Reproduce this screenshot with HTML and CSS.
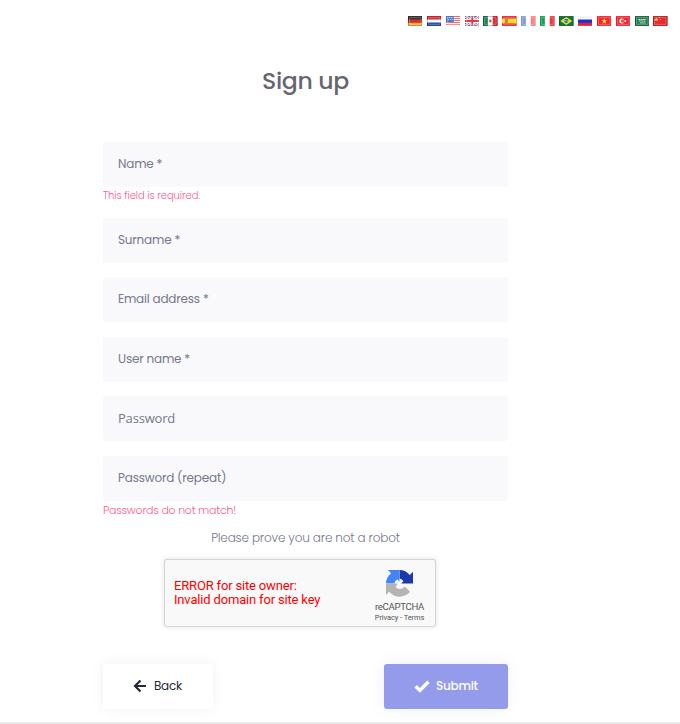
FILE: index.html
```html
<!DOCTYPE html>
<html lang="en">
<head>
<meta charset="utf-8">
<title>Sign up</title>
<link rel="stylesheet" href="styles.css">
</head>
<body>
<nav class="flags">
  <svg viewBox="0 0 15 10"><path fill="#222" d="M0 0h15v4H0z"/><path fill="#e01c12" d="M0 3.500h15V7H0z"/><path fill="#edb52b" d="M0 7h15v3H0z"/><path class="gloss" d="M1.500 1.500h12v7h-12z"/><path class="rim" d="M.5.5h14v9H.5z"/></svg>
  <svg viewBox="0 0 15 10"><path fill="#e01622" d="M0 0h15v4H0z"/><path fill="#fff" d="M0 3.500h15V7H0z"/><path fill="#0a45a8" d="M0 6.500h15V10H0z"/><path class="gloss" d="M1.500 1.500h12v7h-12z"/><path class="rim" d="M.5.5h14v9H.5z"/></svg>
  <svg viewBox="0 0 15 10"><path fill="#fff" d="M0 0h15v10H0z"/><path stroke="#e7555b" d="M0 .5h15M0 2.500h15M0 4.500h15M0 6.500h15M0 8.500h15"/><path fill="#3d70cc" d="M0 0h8v6H0z"/><path stroke="#c6d9f5" stroke-dasharray="1 1" d="M1 1.500h6M2 3.500h5"/><path class="gloss" d="M1.500 1.500h12v7h-12z"/></svg>
  <svg viewBox="0 0 15 10"><path fill="#3565b1" d="M0 0h15v10H0z"/><path stroke="#fff" stroke-width="2.400" d="m0 0 15 10M15 0 0 10"/><path stroke="#df4b50" d="m0 0 15 10M15 0 0 10"/><path stroke="#fff" stroke-width="4" d="M7.500 0v10M0 5h15"/><path stroke="#dd2937" stroke-width="2" d="M7.500 0v10M0 5h15"/><path class="gloss" d="M1.500 1.500h12v7h-12z"/></svg>
  <svg viewBox="0 0 15 10"><path fill="#fff" d="M0 0h15v10H0z"/><path fill="#087b45" d="M0 0h5v10H0z"/><path fill="#e01c2a" d="M10 0h5v10h-5z"/><circle cx="7.500" cy="5" r="1.500" fill="#987344"/><path class="gloss" d="M1.500 1.500h12v7h-12z"/><path class="rim" d="M.5.5h14v9H.5z"/></svg>
  <svg viewBox="0 0 15 10"><path fill="#e31721" d="M0 0h15v10H0z"/><path fill="#ffd51c" d="M0 2.500h15v5H0z"/><path fill="#b97932" d="M3 3h3v4H3z"/><path class="gloss" d="M1.500 1.500h12v7h-12z"/></svg>
  <svg viewBox="0 0 15 10"><path fill="#fff" d="M0 0h15v10H0z"/><path fill="#7095d8" d="M0 0h5v10H0z"/><path fill="#f07a7e" d="M10 0h5v10h-5z"/><path class="gloss" d="M1.500 1.500h12v7h-12z"/></svg>
  <svg viewBox="0 0 15 10"><path fill="#fff" d="M0 0h15v10H0z"/><path fill="#099646" d="M0 0h5v10H0z"/><path fill="#ed2931" d="M10 0h5v10h-5z"/><path class="gloss" d="M1.500 1.500h12v7h-12z"/></svg>
  <svg viewBox="0 0 15 10"><path fill="#0a7d35" d="M0 0h15v10H0z"/><path fill="#f4df2d" d="m7.500 1 6 4-6 4-6-4z"/><circle cx="7.500" cy="5" r="2.200" fill="#3568a8"/><path stroke="#d8e8e8" stroke-width=".6" d="m5.500 4.500 4 1"/><path class="rim" d="M.5.5h14v9H.5z"/></svg>
  <svg viewBox="0 0 15 10"><path fill="#f4f4f8" d="M0 0h15v4H0z"/><path fill="#1730d5" d="M0 3.500h15V7H0z"/><path fill="#e7202b" d="M0 7h15v3H0z"/></svg>
  <svg viewBox="0 0 15 10"><path fill="#f0141c" d="M0 0h15v10H0z"/><path fill="#ffdf2c" d="m7.500 2 .8 2.200h2.200L8.700 5.600l.7 2.200-1.900-1.300-1.900 1.300.7-2.200-1.800-1.400h2.200z"/><path class="gloss" d="M1.500 1.500h12v7h-12z"/></svg>
  <svg viewBox="0 0 15 10"><path fill="#f0141f" d="M0 0h15v10H0z"/><circle cx="6" cy="5" r="2.600" fill="#fff"/><circle cx="6.900" cy="5" r="1.900" fill="#e83c45"/><circle cx="9.600" cy="5" r="1" fill="#fff"/><path class="gloss" d="M1.500 1.500h12v7h-12z"/></svg>
  <svg viewBox="0 0 15 10"><path fill="#147340" d="M0 0h15v10H0z"/><path stroke="#c8ddcf" d="M3.500 3.500h8M4 5h7" stroke-dasharray="2 .4"/><path stroke="#c8ddcf" stroke-width=".8" d="M5 7h6"/><path class="gloss" d="M1.500 1.500h12v7h-12z"/><path class="rim" d="M.5.5h14v9H.5z"/></svg>
  <svg viewBox="0 0 15 10"><path fill="#e81a1e" d="M0 0h15v10H0z"/><path fill="#ffd43c" d="m3.500 1.500.6 1.400h1.400l-1.100 1 .4 1.400-1.300-.8-1.300.8.4-1.400-1.100-1h1.400zM6 1h1v1H6zM7 3h1v1H7z"/><path class="gloss" d="M1.500 1.500h12v7h-12z"/><path class="rim" d="M.5.5h14v9H.5z"/></svg>
</nav>
<main class="signup">
  <h1>Sign up</h1>
  <form>
    <label class="field name">Name *</label>
    <p class="error required">This field is required.</p>
    <label class="field surname">Surname *</label>
    <label class="field email">Email address *</label>
    <label class="field user">User name *</label>
    <label class="field password">Password</label>
    <label class="field repeat">Password (repeat)</label>
    <p class="error mismatch">Passwords do not match!</p>
    <p class="prove">Please prove you are not a robot</p>
    <section class="captcha">
      <p class="captcha-error">ERROR for site owner:<br>Invalid domain for site key</p>
      <div class="captcha-brand">
        <svg class="captcha-logo" viewBox="0 0 64 64"><path fill="#1c3aa9" d="M64 32V4.400l-7.600 7.600A32 32 0 0 0 32 0v20a12 12 0 0 1 9.300 6.800L36 32z"/><path fill="#4285f4" d="M32 0H4.500l7.600 7.600A32 32 0 0 0 0 32h20a12 12 0 0 1 6.800-9.300L32 28z"/><path fill="#b4b4b4" d="M0 32v27.500l7.700-7.700A32 32 0 0 0 57 51.500L44.500 39a14 14 0 0 1-21.700 1.300L28 32z"/></svg>
        <span class="brand-name">reCAPTCHA</span>
        <span class="brand-links">Privacy - Terms</span>
      </div>
    </section>
    <div class="actions">
      <button class="button back" type="button"><svg viewBox="0 0 14 14"><path d="M7.500 1.500 2 7l5.500 5.500M2.500 7H13"/></svg><span>Back</span></button>
      <button class="button submit" type="button"><svg viewBox="0 0 16 14"><path d="m1.600 7.200 4.300 4.200 8.600-8.600"/></svg><span>Submit</span></button>
    </div>
  </form>
</main>
<footer class="edge"></footer>
</body>
</html>
```
FILE: styles.css
```css
* { box-sizing: border-box; }
body {
  margin: 0;
  height: 724px;
  overflow: hidden;
  display: flex;
  flex-direction: column;
  background: #fff;
  font-family: Poppins, Inter, "Open Sans", sans-serif;
  font-size: 12px;
  color: #6c7293;
}
p, h1 { margin: 0; }
svg { display: block; fill: none; }
.flags {
  display: flex;
  justify-content: flex-end;
  gap: 4.300px;
  height: 26px;
  padding: 16px 12px 0 0;
  flex: none;
}
.flags svg { width: 14.600px; height: 10px; }
.gloss { fill: #fff; fill-opacity: .08; stroke: #fff; stroke-opacity: .3; }
.rim { stroke: #000; stroke-opacity: .25; }
.signup { width: 405px; margin-left: 103px; flex: none; }
h1 {
  height: 115.900px;
  padding-top: 37px;
  text-align: center;
  font-size: 23.600px;
  line-height: 36px;
  font-weight: 500;
  letter-spacing: -.35px;
  color: #67666e;
}
.field {
  display: flex;
  align-items: center;
  height: 45px;
  margin-bottom: 14.500px;
  padding: 0 15px;
  border-radius: 3px;
  background: #f9f9fc;
  color: #74788d;
  letter-spacing: -.2px;
}
.name, .repeat { margin-bottom: 0; }
.email { padding-bottom: 1px; }
.password {
  padding-bottom: 2px;
  font-family: "Open Sans", "Noto Sans", sans-serif;
  font-size: 13px;
  letter-spacing: -.2px;
}
.error { color: #fd5c8a; font-weight: 300; white-space: nowrap; }
.required { height: 31px; font-size: 10px; line-height: 18px; letter-spacing: -.08px; }
.mismatch { height: 27px; font-size: 11px; line-height: 19px; letter-spacing: -.25px; }
.prove {
  height: 31px;
  text-align: center;
  line-height: 20px;
  font-weight: 300;
  letter-spacing: -.17px;
  color: #74788d;
}
.captcha {
  display: flex;
  justify-content: space-between;
  width: 272px;
  height: 68px;
  margin-left: 61px;
  border: 1px solid #d3d3d3;
  border-radius: 3px;
  background: #f9f9f9;
  box-shadow: 0 0 4px 1px rgba(0,0,0,.08);
  font-family: Roboto, sans-serif;
}
.captcha-error { padding: 19px 0 0 9px; color: #f00; font-size: 13px; line-height: 14px; letter-spacing: -.17px; }
.captcha-brand {
  display: flex;
  flex-direction: column;
  align-items: center;
  width: 71px;
  padding-top: 10px;
  color: #555;
}
.captcha-logo { width: 27px; height: 27px; }
.brand-name { margin-top: 4px; font-size: 9.600px; line-height: 12px; letter-spacing: -.3px; }
.brand-links { font-size: 7.500px; line-height: 10px; letter-spacing: -.1px; }
.actions { display: flex; justify-content: space-between; margin-top: 37px; }
.button {
  display: flex;
  align-items: center;
  height: 45px;
  padding: 0 0 0 30px;
  border: 0;
  border-radius: 3px;
  font: inherit;
  letter-spacing: -.25px;
}
.back { width: 110px; gap: 7px; background: #fff; color: #242939; box-shadow: 0 0 15px rgba(0,0,0,.06); }
.back svg { width: 14px; height: 14px; stroke: #242939; stroke-width: 2.200; }
.submit { width: 124px; gap: 6px; background: #949bea; color: #fff; font-weight: 500; box-shadow: 0 0 15px rgba(93,120,255,.1); }
.submit svg { width: 16px; height: 14px; stroke: #fff; stroke-width: 3.500; }
.edge { height: 2px; margin-top: auto; background: #ececec; flex: none; }
```
